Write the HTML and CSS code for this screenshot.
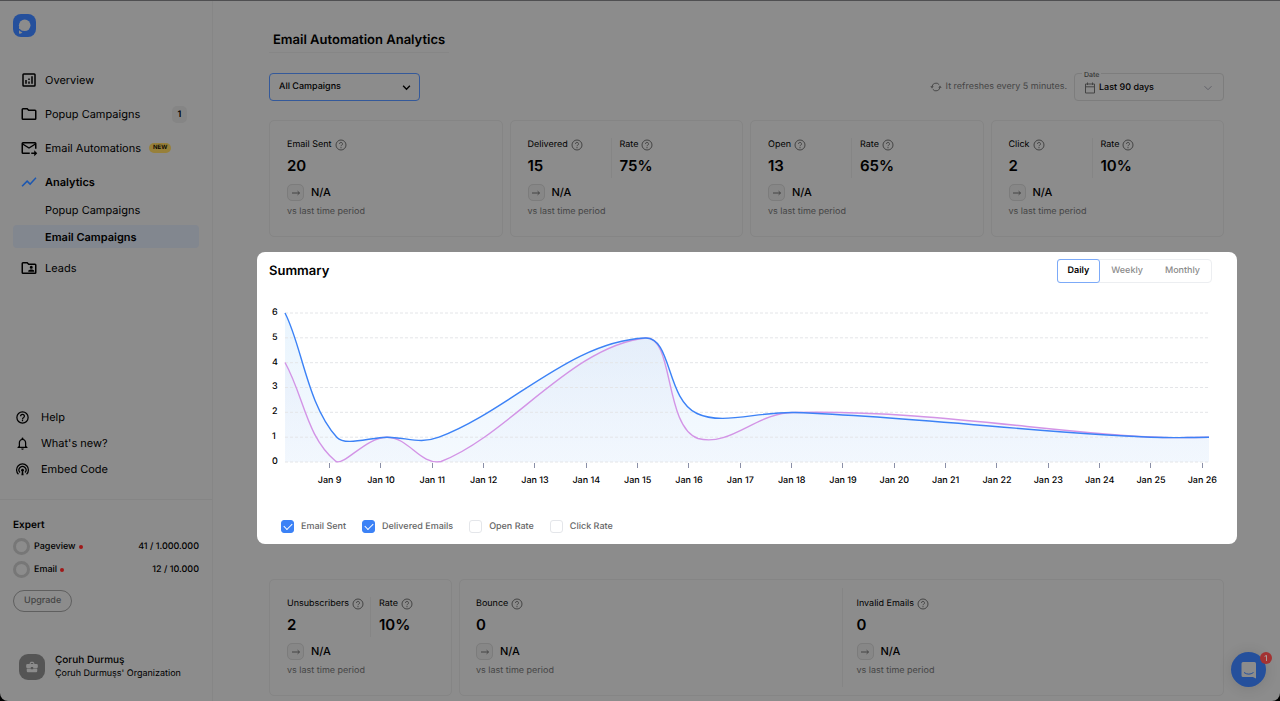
FILE: index.html
```html
<!DOCTYPE html>
<html lang="en">
<head>
<meta charset="utf-8">
<title>Email Automation Analytics</title>
<link rel="stylesheet" href="styles.css">
</head>
<body>
<svg class="sprite" aria-hidden="true">
  <symbol id="help" viewBox="0 0 12 12"><circle cx="6" cy="6" r="5" fill="none" stroke="currentColor" stroke-width="1"/><path d="M4.500 4.900a1.500 1.500 0 1 1 2.200 1.300c-.5.3-.7.5-.7 1" fill="none" stroke="currentColor" stroke-width="1"/><circle cx="6" cy="8.700" r=".6" fill="currentColor"/></symbol>
  <symbol id="arrow" viewBox="0 0 10 10"><path d="M1 5h7.500M6.600 3.200 8.500 5 6.600 6.800" fill="none" stroke="currentColor" stroke-width="1"/></symbol>
</svg>
<div class="app">
  <aside class="sidebar">
    <a class="logo" href="#" aria-label="Home">
      <svg width="23" height="23" viewBox="0 0 23 23"><rect width="23" height="23" rx="8" fill="#25509c"/><circle cx="11.700" cy="11.300" r="5.800" fill="#8c8c8c"/><path d="M6 12v7.500q2.200.6 3.500-1.500l1-2z" fill="#8c8c8c"/><path d="M6 15.200q1.800 2.600 5.500 2.600" fill="none" stroke="#25509c" stroke-width="1.200"/></svg>
    </a>
    <nav class="nav" aria-label="Main">
      <a class="nav-item" href="#"><svg class="nav-icon" viewBox="0 0 24 24"><path d="M19 3H5a2 2 0 0 0-2 2v14a2 2 0 0 0 2 2h14a2 2 0 0 0 2-2V5a2 2 0 0 0-2-2zm0 16H5V5h14v14zM7 12h2v5H7zm8-5h2v10h-2zm-4 7h2v3h-2zm0-4h2v2h-2z"/></svg>Overview</a>
      <a class="nav-item" href="#"><svg class="nav-icon" viewBox="0 0 24 24"><path d="M9.170 6l2 2H20v10H4V6h5.170M10 4H4a2 2 0 0 0-2 2v12a2 2 0 0 0 2 2h16a2 2 0 0 0 2-2V8a2 2 0 0 0-2-2h-8l-2-2z"/></svg>Popup Campaigns<span class="count">1</span></a>
      <a class="nav-item" href="#"><svg class="nav-icon" viewBox="0 0 24 24"><path d="M20 4H4a2 2 0 0 0-2 2v12a2 2 0 0 0 2 2h9v-2H4V8l8 5 8-5v5h2V6a2 2 0 0 0-2-2zm-8 7L4 6h16l-8 5zm7 4 4 4-4 4v-3h-4v-2h4v-3z"/></svg>Email Automations<span class="new">NEW</span></a>
      <a class="nav-item strong" href="#"><svg class="nav-icon blue" viewBox="0 0 24 24"><path d="m3.500 18.490 6-6.010 4 4L22 6.920l-1.410-1.410-7.090 7.970-4-4L2 16.990z"/></svg>Analytics</a>
      <a class="nav-sub" href="#">Popup Campaigns</a>
      <a class="nav-sub current" href="#" aria-current="page">Email Campaigns</a>
      <a class="nav-item last" href="#"><svg class="nav-icon" viewBox="0 0 24 24"><path d="M20 6h-8l-2-2H4a2 2 0 0 0-2 2v12a2 2 0 0 0 2 2h16a2 2 0 0 0 2-2V8a2 2 0 0 0-2-2zm0 12H4V6h5.170l2 2H20v10zm-5-5a2 2 0 1 0 0-4 2 2 0 0 0 0 4zm-4 4h8v-1c0-1.330-2.670-2-4-2s-4 .67-4 2v1z"/></svg>Leads</a>
    </nav>
    <nav class="support" aria-label="Support">
      <a class="support-item" href="#"><svg class="support-icon" viewBox="0 0 24 24"><path d="M11 18h2v-2h-2v2zm1-16a10 10 0 1 0 0 20 10 10 0 0 0 0-20zm0 18a8 8 0 1 1 0-16 8 8 0 0 1 0 16zm0-14a4 4 0 0 0-4 4h2a2 2 0 1 1 4 0c0 2-3 1.750-3 5h2c0-2.250 3-2.500 3-5a4 4 0 0 0-4-4z"/></svg>Help</a>
      <a class="support-item" href="#"><svg class="support-icon" viewBox="0 0 24 24"><path d="M12 22a2 2 0 0 0 2-2h-4c0 1.100.9 2 2 2zm6-6v-5c0-3.070-1.630-5.640-4.500-6.320V4a1.500 1.500 0 0 0-3 0v.68C7.640 5.360 6 7.920 6 11v5l-2 2v1h16v-1l-2-2zm-2 1H8v-6c0-2.480 1.510-4.500 4-4.500s4 2.020 4 4.500v6z"/></svg>What's new?</a>
      <a class="support-item" href="#"><svg class="support-icon" viewBox="0 0 24 24" ><g fill="none" stroke="#000" stroke-width="2"><path d="M5.500 19.500a9.500 9.500 0 1 1 13 0"/><path d="M8 16.800a5.600 5.600 0 1 1 8 0"/></g><circle cx="12" cy="13" r="2.200"/><path d="M11.200 13h1.600l1 8h-3.600z"/></svg>Embed Code</a>
    </nav>
    <section class="plan">
      <h2 class="plan-name">Expert</h2>
      <div class="usage"><span class="ring"></span>Pageview<span class="dot"></span><span class="amount">41 / 1.000.000</span></div>
      <div class="usage"><span class="ring"></span>Email<span class="dot"></span><span class="amount">12 / 10.000</span></div>
      <button class="upgrade" type="button">Upgrade</button>
    </section>
    <div class="account">
      <span class="avatar"><svg width="14" height="14" viewBox="0 0 24 24" fill="#8c8c8c"><path d="M10 16v-1H3.010L3 19a2 2 0 0 0 2 2h14a2 2 0 0 0 2-2v-4h-7v1h-4zm10-9h-4V5l-2-2h-4L8 5v2H4a2 2 0 0 0-2 2v3a2 2 0 0 0 2 2h6v-2h4v2h6a2 2 0 0 0 2-2V9a2 2 0 0 0-2-2zm-6 0h-4V5h4v2z"/></svg></span>
      <div><div class="account-name">Çoruh Durmuş</div><div class="account-org">Çoruh Durmuşs' Organization</div></div>
    </div>
  </aside>

  <main class="main">
    <header><h1 class="title">Email Automation Analytics</h1></header>
    <div class="toolbar">
      <div class="campaign">
        <select class="campaign-select" aria-label="Campaign"><option>All Campaigns</option></select>
        <svg class="chevron" viewBox="0 0 8 8"><path d="m1 2.500 3 3 3-3" fill="none" stroke="#000" stroke-width="1.200"/></svg>
      </div>
      <div class="refresh"><svg width="12" height="12" viewBox="0 0 12 12"><g fill="none" stroke="#4a4a4a" stroke-width="1"><path d="M2 6a4 4 0 0 1 7.200-2.300M10 6a4 4 0 0 1-7.200 2.300"/></g><path d="M.3 5.200h3.400L2 7.400zM8.300 6.800h3.400L10 4.600z" fill="#4a4a4a"/></svg>It refreshes every 5 minutes.</div>
      <fieldset class="date"><legend>Date</legend>
        <button class="date-button" type="button"><svg width="12" height="12" viewBox="0 0 12 12"><path d="M1.500 2h9v9h-9zM1.500 4.800h9M3.500.5V3M8.500.5V3" fill="none" stroke="#444" stroke-width="1"/></svg>Last 90 days<svg class="date-chevron" width="10" height="10" viewBox="0 0 10 10"><path d="m1.500 3.200 3.500 3.500 3.500-3.500" fill="none" stroke="#62626a" stroke-width="1"/></svg></button>
      </fieldset>
    </div>

    <section class="cards" aria-label="Sending">
      <article class="card"><div class="metrics"><div class="metric"><div class="label">Email Sent<svg class="q"><use href="#help"/></svg></div><div class="value">20</div></div></div><div class="trend"><span class="badge"><svg><use href="#arrow"/></svg></span>N/A</div><div class="note">vs last time period</div></article>
      <article class="card"><div class="metrics"><div class="metric"><div class="label">Delivered<svg class="q"><use href="#help"/></svg></div><div class="value">15</div></div><div class="metric rate"><div class="label">Rate<svg class="q"><use href="#help"/></svg></div><div class="value">75%</div></div></div><div class="trend"><span class="badge"><svg><use href="#arrow"/></svg></span>N/A</div><div class="note">vs last time period</div></article>
      <article class="card"><div class="metrics"><div class="metric"><div class="label">Open<svg class="q"><use href="#help"/></svg></div><div class="value">13</div></div><div class="metric rate"><div class="label">Rate<svg class="q"><use href="#help"/></svg></div><div class="value">65%</div></div></div><div class="trend"><span class="badge"><svg><use href="#arrow"/></svg></span>N/A</div><div class="note">vs last time period</div></article>
      <article class="card"><div class="metrics"><div class="metric"><div class="label">Click<svg class="q"><use href="#help"/></svg></div><div class="value">2</div></div><div class="metric rate"><div class="label">Rate<svg class="q"><use href="#help"/></svg></div><div class="value">10%</div></div></div><div class="trend"><span class="badge"><svg><use href="#arrow"/></svg></span>N/A</div><div class="note">vs last time period</div></article>
    </section>

    <section class="summary">
      <div class="summary-head">
        <h2 class="summary-title">Summary</h2>
        <div class="periods"><button class="period active" type="button">Daily</button><button class="period" type="button">Weekly</button><button class="period" type="button">Monthly</button></div>
      </div>
      <div class="chart">
        <div class="y-axis"><span>6</span><span>5</span><span>4</span><span>3</span><span>2</span><span>1</span><span>0</span></div>
        <div class="plot">
          <svg class="plot-svg" viewBox="285 312.500 924 149" preserveAspectRatio="none" role="img" aria-label="Emails sent and delivered per day">
            <defs>
              <linearGradient id="sent" x1="0" y1="0" x2="0" y2="1"><stop offset="0" stop-color="#e4f2fd" stop-opacity=".8"/><stop offset="1" stop-color="#f0f7fe" stop-opacity=".7"/></linearGradient>
              <linearGradient id="delivered" x1="0" y1="0" x2="0" y2="1"><stop offset="0" stop-color="#e0e9f8" stop-opacity=".6"/><stop offset="1" stop-color="#eef4fd" stop-opacity=".4"/></linearGradient>
            </defs>
            <path fill="url(#sent)" d="M285 312.500C302 345 307 404 337 437C345 446 371 436.700 387 436.700C406 436.700 420 444 439 436.700C510 410 570 341 645 337.500C672 336 666 399 697 413C722 425 757 411 795 412C930 417 1060 435 1163 437C1178 437.500 1190 436.700 1209 436.700V461.500H285Z"/>
            <path fill="url(#delivered)" d="M285 362C304 396 306 436 336 461C345 465 366 436.700 387 436.700C409 436.700 420 465 441 461C510 434 572 345 646 337.500C674 336 664 426 698 438C731 447 757 411 795 412C930 409 1060 434 1163 437C1178 437.500 1190 436.700 1209 436.700V461.500H285Z"/>
            <path class="grid" d="M285 312.500H1209M285 337.300H1209M285 362.200H1209M285 387H1209M285 411.800H1209M285 436.700H1209M285 461.500H1209"/>
            <path class="line pink" d="M285 362C304 396 306 436 336 461C345 465 366 436.700 387 436.700C409 436.700 420 465 441 461C510 434 572 345 646 337.500C674 336 664 426 698 438C731 447 757 411 795 412C930 409 1060 434 1163 437C1178 437.500 1190 436.700 1209 436.700"/>
            <path class="line azure" d="M285 312.500C302 345 307 404 337 437C345 446 371 436.700 387 436.700C406 436.700 420 444 439 436.700C510 410 570 341 645 337.500C672 336 666 399 697 413C722 425 757 411 795 412C930 417 1060 435 1163 437C1178 437.500 1190 436.700 1209 436.700"/>
          </svg>
          <div class="x-axis"><span>Jan 9</span><span>Jan 10</span><span>Jan 11</span><span>Jan 12</span><span>Jan 13</span><span>Jan 14</span><span>Jan 15</span><span>Jan 16</span><span>Jan 17</span><span>Jan 18</span><span>Jan 19</span><span>Jan 20</span><span>Jan 21</span><span>Jan 22</span><span>Jan 23</span><span>Jan 24</span><span>Jan 25</span><span>Jan 26</span></div>
        </div>
      </div>
      <div class="series">
        <label><input type="checkbox" checked>Email Sent</label>
        <label><input type="checkbox" checked>Delivered Emails</label>
        <label><input type="checkbox">Open Rate</label>
        <label><input type="checkbox">Click Rate</label>
      </div>
    </section>

    <section class="cards losses" aria-label="Losses">
      <article class="card"><div class="metrics"><div class="metric"><div class="label">Unsubscribers<svg class="q"><use href="#help"/></svg></div><div class="value">2</div></div><div class="metric rate"><div class="label">Rate<svg class="q"><use href="#help"/></svg></div><div class="value">10%</div></div></div><div class="trend"><span class="badge"><svg><use href="#arrow"/></svg></span>N/A</div><div class="note">vs last time period</div></article>
      <article class="card pair">
        <div class="half"><div class="label">Bounce<svg class="q"><use href="#help"/></svg></div><div class="value">0</div><div class="trend"><span class="badge"><svg><use href="#arrow"/></svg></span>N/A</div><div class="note">vs last time period</div></div>
        <div class="half"><div class="label">Invalid Emails<svg class="q"><use href="#help"/></svg></div><div class="value">0</div><div class="trend"><span class="badge"><svg><use href="#arrow"/></svg></span>N/A</div><div class="note">vs last time period</div></div>
      </article>
    </section>
  </main>
  <button class="chat" type="button" aria-label="Open chat">
    <svg width="18" height="18" viewBox="0 0 18 18"><path d="M3 1h11.500A1.500 1.500 0 0 1 16 2.500V17.500L12.800 16H3a1.500 1.500 0 0 1-1.500-1.500v-12A1.500 1.500 0 0 1 3 1z" fill="#8c8c8c"/><path d="M4 11.500q4.800 3.300 9.500 0" fill="none" stroke="#25509c" stroke-width="1"/></svg>
    <span class="unread">1</span>
  </button>
</div>
</body>
</html>
```
FILE: styles.css
```css
* { box-sizing: border-box; }
body { margin: 0; background: #000; font-family: Inter, "Liberation Sans", sans-serif; color: #000; font-size: 9px; line-height: 12px; text-rendering: geometricPrecision; }
h1, h2 { margin: 0; font-weight: 600; }
a { color: inherit; text-decoration: none; }
button, select { font: inherit; color: inherit; background: none; border: 0; padding: 0; margin: 0; text-rendering: inherit; }
.sprite { position: absolute; width: 0; height: 0; }
.app { display: flex; min-height: 100vh; background: #8c8c8c; border-top: 1px solid #4f4f51; border-radius: 0 0 8px 8px; }

.sidebar { flex: 0 0 213px; display: flex; flex-direction: column; border-right: 1px solid #868686; }
.logo { display: block; height: 23px; margin: 13px 13px 26px; }
.logo svg { display: block; }
.nav { display: flex; flex-direction: column; padding: 0 13px; font-size: 11px; line-height: 18px; }
.nav-item { display: flex; align-items: center; height: 34px; padding: 0 7px; }
.nav-icon { width: 18px; height: 18px; margin-right: 7px; }
.nav-icon.blue { fill: #1c57b0; }
.strong, .current { font-weight: 600; }
.nav-sub { display: flex; align-items: center; height: 23px; padding-left: 32px; margin-bottom: 4px; border-radius: 4px; }
.strong { margin-bottom: -1px; }
.current { background: #82878f; }
.nav-item.last { height: 32px; }
.count { margin-left: auto; margin-right: 5px; width: 15px; height: 17px; border-radius: 5px; background: #858585; font-size: 9px; line-height: 17px; font-weight: 600; text-align: center; }
.new { margin-left: 8px; padding: 0 4px; border-radius: 5px; background: #97803a; font-size: 6px; line-height: 10px; font-weight: 600; }
.support { margin-top: auto; padding: 0 15px 17px; font-size: 11px; line-height: 18px; }
.support-item { display: flex; align-items: center; height: 26px; }
.support-icon { width: 15px; height: 15px; margin-right: 11px; }
.plan { border-top: 1px solid #858585; padding: 18px 13px 0; }
.plan-name { font-size: 10px; line-height: 15px; margin-bottom: 5px; }
.usage { display: flex; align-items: center; height: 17px; margin-bottom: 6px; font-weight: 500; }
.ring { width: 17px; height: 17px; margin-right: 4px; border: 3px solid #777; border-radius: 50%; }
.dot { width: 4px; height: 4px; margin-left: 3px; border-radius: 50%; background: #a01818; }
.amount { margin-left: auto; }
.upgrade { height: 22px; margin-top: 6px; padding: 0 10px; border: 1px solid #5f5f5f; border-radius: 11px; color: #454545; font-weight: 500; }
.account { display: flex; align-items: center; gap: 10px; padding: 41px 19px 20px; }
.avatar { display: flex; align-items: center; justify-content: center; width: 26px; height: 26px; border-radius: 9px; background: #555; }
.account-name { font-size: 10px; line-height: 14px; font-weight: 500; }
.account-org { line-height: 14px; }

.main { flex: 1; min-width: 0; padding: 29px 56px 0; }
.title { display: inline-block; padding: 0 4px 1px; border-bottom: 1px solid #868686; font-size: 13px; line-height: 21px; }
.toolbar { display: flex; align-items: center; height: 28px; margin: 20px 0 19px; }
.campaign { position: relative; }
.campaign-select { display: block; width: 151px; height: 28px; padding: 0 9px; border: 1px solid #34599a; border-radius: 4px; appearance: none; font-weight: 500; }
.chevron { position: absolute; right: 9px; top: 10px; width: 9px; height: 9px; }
.refresh { display: flex; align-items: center; gap: 4px; margin-left: auto; margin-right: 7px; color: #454545; }
.date { width: 150px; height: 34px; margin: -6px 0 0; padding: 0 10px 0 9px; border: 1px solid #7d7d7d; border-radius: 4px; }
.date legend { padding: 4px 2px 0; margin-left: -2px; font-size: 7px; line-height: 8px; font-weight: 500; color: #333; }
.date-button { display: flex; align-items: center; gap: 3px; width: 100%; height: 17px; font-weight: 500; }
.date-chevron { margin-left: auto; }

.cards { display: grid; grid-template-columns: repeat(4, 1fr); gap: 7px; }
.card { min-height: 117px; padding: 17px; border: 1px solid #858585; border-radius: 5px; }
.metrics { display: flex; }
.metric { min-width: 83px; }
.metric.rate { padding-left: 8px; border-left: 1px solid #858585; }
.label { display: flex; align-items: center; gap: 3px; height: 13px; font-weight: 400; white-space: nowrap; }
.q { width: 12px; height: 12px; color: #444; }
.value { padding: 6px 0 3px; font-size: 15px; line-height: 18px; font-weight: 600; }
.trend { display: flex; align-items: center; gap: 7px; margin-top: 6px; font-size: 11px; line-height: 17px; font-weight: 500; }
.badge { display: flex; align-items: center; justify-content: center; width: 17px; height: 17px; border: 1px solid #7c7c7c; border-radius: 5px; background: #878787; color: #444; }
.badge svg { width: 10px; height: 10px; }
.note { margin-top: 5px; color: #454545; }
.losses { grid-template-columns: 183px 1fr; margin-top: 35px; }
.losses .card.pair { display: grid; grid-template-columns: 1fr 1fr; padding: 8px 0; }
.half { padding: 9px 16px 0; }
.half + .half { padding-left: 14px; border-left: 1px solid #858585; }

.summary { margin: 15px -13px 0 -12px; padding: 7px 25px 11px 12px; background: #fff; border-radius: 8px; }
.summary-head { display: flex; align-items: center; justify-content: space-between; }
.summary-title { font-size: 13px; line-height: 18px; }
.periods { display: flex; border: 1px solid #eceef1; border-radius: 4px; font-weight: 500; color: #8b8b8b; }
.period { height: 22px; padding: 0 11px; }
.period.active { margin: -1px 0 -1px -1px; height: 24px; padding: 0 10px; border: 1px solid #7caaf8; border-radius: 3px; color: #000; font-weight: 600; }
.chart { display: flex; margin: 24px 3px 0 0; }
.y-axis { display: flex; flex-direction: column; justify-content: space-between; height: 161px; width: 16px; padding-left: 3px; font-weight: 500; }
.plot { flex: 1; min-width: 0; padding-top: 6px; }
.plot-svg { display: block; width: 100%; height: 149px; overflow: visible; }
.grid { fill: none; stroke: #e4e5e8; stroke-width: 1; stroke-dasharray: 3 2; vector-effect: non-scaling-stroke; }
.line { fill: none; stroke-width: 1.400px; vector-effect: non-scaling-stroke; }
.pink { stroke: #d394e6; }
.azure { stroke: #3c82f6; }
.x-axis { display: grid; grid-template-columns: repeat(18, 1fr); margin: 1px -19px 0 19px; font-weight: 500; text-align: center; }
.x-axis span { white-space: nowrap; }
.x-axis span::before { content: ""; display: block; width: 1px; height: 5px; margin: 0 auto 7px; background: #8b90a8; }
.series { display: flex; gap: 16px; margin-top: 33px; padding-left: 12px; color: #666; font-weight: 500; }
.series label { display: flex; align-items: center; gap: 7px; }
.series input { appearance: none; width: 13px; height: 13px; margin: 0; border: 1px solid #e4e6ea; border-radius: 3px; background: #fff; display: grid; place-items: center; }
.series input:checked { border-color: #3c82f6; background: #3c82f6; }
.series input:checked::before { content: ""; width: 7px; height: 4px; border: solid #fff; border-width: 0 0 1px 1px; transform: translateY(-1px) rotate(-45deg); }

.chat { position: fixed; right: 14px; bottom: 14px; display: flex; align-items: center; justify-content: center; width: 35px; height: 35px; border-radius: 50%; background: #25509c; box-shadow: 0 1px 14px rgba(0,0,0,.12); }
.unread { position: absolute; right: -6px; top: 0; width: 12px; height: 12px; border-radius: 50%; background: #a33232; color: #aaa; font-size: 8px; line-height: 12px; font-weight: 500; }
```
